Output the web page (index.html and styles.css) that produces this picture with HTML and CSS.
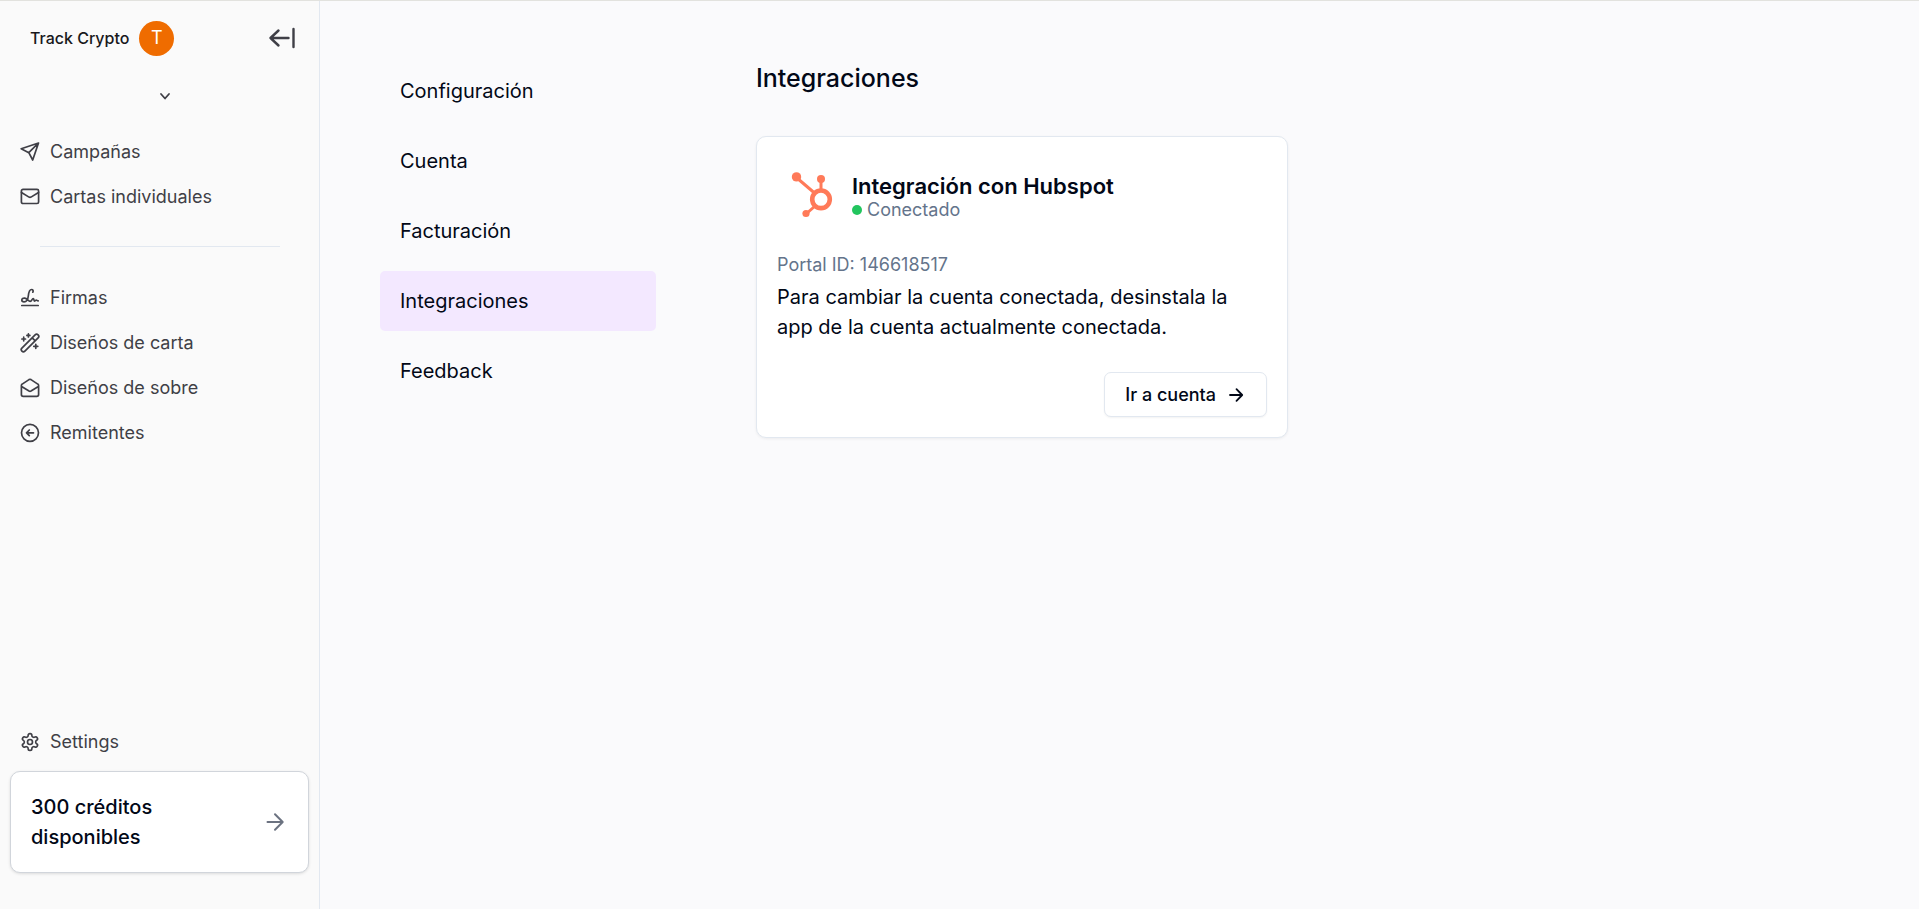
FILE: index.html
```html
<!DOCTYPE html>
<html lang="es">
<head>
<meta charset="utf-8">
<meta name="viewport" content="width=device-width, initial-scale=1">
<title>Integraciones</title>
<link rel="stylesheet" href="styles.css">
</head>
<body>
<div class="app">
  <aside class="sidebar">
    <header class="brand">
      <span class="brand-name">Track Crypto</span>
      <span class="avatar">T</span>
      <button class="icon-button collapse" type="button" aria-label="Contraer menú">
        <svg width="28" height="24" viewBox="0 0 28 24" fill="none" stroke="currentColor" stroke-width="2.4" stroke-linecap="round" stroke-linejoin="round"><path d="M20.500 12H2.500M10.500 4.500 2.500 12l8 7.500M25.500 3v18"/></svg>
      </button>
    </header>
    <div class="switcher">
      <button class="icon-button" type="button" aria-label="Cambiar espacio">
        <svg width="20" height="20" viewBox="0 0 20 20" fill="none" stroke="currentColor" stroke-width="1.800" stroke-linecap="round" stroke-linejoin="round"><path d="m6 8 4 4.500L14 8"/></svg>
      </button>
    </div>
    <nav class="menu" aria-label="Principal">
      <a class="menu-link" href="#">
        <svg class="icon" viewBox="0 0 20 20"><path d="M18.500 1 1.200 6.800l7.600 3.900 3.900 7.300zM18.300 1.200 8.800 10.700"/></svg>
        Campañas
      </a>
      <a class="menu-link" href="#">
        <svg class="icon" viewBox="0 0 20 20"><rect x="1.400" y="2.300" width="17.200" height="14.200" rx="1.600"/><path d="m1.500 5.500 7.500 4.600a2 2 0 0 0 2 0l7.500-4.600"/></svg>
        Cartas individuales
      </a>
    </nav>
    <hr class="divider">
    <nav class="menu" aria-label="Diseños">
      <a class="menu-link" href="#">
        <svg class="icon" viewBox="0 0 20 20"><path d="M1.800 17.500h16.400M12.800 4.200c.8-1.300.2-2.700-1.200-2.700C9.200 1.500 8.600 5 8.300 8c-.4 3.800-1.800 5.800-4.200 5.800-1.300 0-2.300-.7-2.300-1.800 0-1.300 1.300-2 2.900-1.800 2.500.3 3.600 3.200 5.500 3.200 1.700 0 1.700-2.900 3-2.900 1 0 .4 2.600 1.500 2.600.8 0 .9-1 1.600-1s.7.700 1.900.7"/></svg>
        Firmas
      </a>
      <a class="menu-link" href="#">
        <svg class="icon" viewBox="0 0 20 20"><path d="M1.900 15.100 15.100 1.900a2.100 2.100 0 0 1 3 3L4.900 18.100a2.100 2.100 0 0 1-3-3zM12.200 4.800l3 3M3.700 4.200v3.600M1.900 6h3.600M8.400.9v3M6.900 2.400h3M15.800 11.300v4M13.800 13.300h4"/></svg>
        Diseños de carta
      </a>
      <a class="menu-link" href="#">
        <svg class="icon" viewBox="0 0 20 20"><path d="M1.400 7.500c0-.6.300-1.100.8-1.400L9 1.600a2 2 0 0 1 2 0l6.800 4.500c.5.300.8.800.8 1.400v9c0 1.100-.7 1.900-1.800 1.900H3.200c-1.100 0-1.800-.8-1.800-1.900zM1.600 8.500 9 13a2 2 0 0 0 2 0l7.400-4.500"/></svg>
        Diseños de sobre
      </a>
      <a class="menu-link" href="#">
        <svg class="icon" viewBox="0 0 20 20"><circle cx="10" cy="9.800" r="8.500"/><path d="M13.500 9.800h-7M9.300 7 6.500 9.800l2.800 2.800"/></svg>
        Remitentes
      </a>
    </nav>
    <div class="sidebar-foot">
      <a class="menu-link" href="#">
        <svg class="icon icon-gear" viewBox="0 0 24 24"><path d="M12.220 2h-.44a2 2 0 0 0-2 2v.18a2 2 0 0 1-1 1.730l-.43.250a2 2 0 0 1-2 0l-.15-.08a2 2 0 0 0-2.730.73l-.22.380a2 2 0 0 0 .73 2.730l.15.100a2 2 0 0 1 1 1.720v.51a2 2 0 0 1-1 1.740l-.15.090a2 2 0 0 0-.73 2.730l.22.380a2 2 0 0 0 2.730.73l.15-.08a2 2 0 0 1 2 0l.43.250a2 2 0 0 1 1 1.730V20a2 2 0 0 0 2 2h.44a2 2 0 0 0 2-2v-.18a2 2 0 0 1 1-1.730l.43-.25a2 2 0 0 1 2 0l.15.080a2 2 0 0 0 2.730-.73l.22-.39a2 2 0 0 0-.73-2.730l-.15-.08a2 2 0 0 1-1-1.740v-.5a2 2 0 0 1 1-1.740l.15-.09a2 2 0 0 0 .73-2.730l-.22-.38a2 2 0 0 0-2.730-.73l-.15.080a2 2 0 0 1-2 0l-.43-.25a2 2 0 0 1-1-1.730V4a2 2 0 0 0-2-2z"/><circle cx="12" cy="12" r="3"/></svg>
        Settings
      </a>
      <a class="credits" href="#">
        <span class="credits-text">300 créditos disponibles</span>
        <svg width="28" height="28" viewBox="0 0 28 28" fill="none" stroke="currentColor" stroke-width="2" stroke-linecap="round" stroke-linejoin="round"><path d="M7.500 14h15M15 6.300l7.700 7.700-7.700 7.700"/></svg>
      </a>
    </div>
  </aside>
  <main class="content">
    <nav class="tabs" aria-label="Ajustes">
      <a class="tab" href="#">Configuración</a>
      <a class="tab" href="#">Cuenta</a>
      <a class="tab" href="#">Facturación</a>
      <a class="tab tab-active" href="#" aria-current="page">Integraciones</a>
      <a class="tab" href="#">Feedback</a>
    </nav>
    <section class="panel">
      <h1 class="title">Integraciones</h1>
      <article class="card">
        <header class="card-head">
          <svg class="logo" viewBox="0 0 50 50" fill="none" stroke="#ff7a59"><circle cx="34" cy="27.300" r="8.800" stroke-width="4.600"/><path d="M34 19V7M27.500 21 10 6M27.500 34.500 19 42" stroke-width="3"/><g fill="#ff7a59" stroke="none"><circle cx="9.500" cy="4.900" r="4.700"/><circle cx="34" cy="7" r="4"/><circle cx="19" cy="41.500" r="3.600"/></g></svg>
          <div>
            <h2 class="card-title">Integración con Hubspot</h2>
            <p class="status"><span class="dot"></span>Conectado</p>
          </div>
        </header>
        <div class="card-body">
          <p class="portal">Portal ID: 146618517</p>
          <p class="note">Para cambiar la cuenta conectada, desinstala la app de la cuenta actualmente conectada.</p>
        </div>
        <footer class="card-foot">
          <button class="account" type="button">
            Ir a cuenta
            <svg width="20" height="20" viewBox="0 0 20 20" fill="none" stroke="currentColor" stroke-width="1.800" stroke-linecap="round" stroke-linejoin="round"><path d="M4 10h12M10.500 4.200 16.200 10l-5.700 5.800"/></svg>
          </button>
        </footer>
      </article>
    </section>
  </main>
</div>
</body>
</html>
```
FILE: styles.css
```css
* { box-sizing: border-box; }

body {
  margin: 0;
  color: #020817;
  background: #fafafc;
  font-family: Inter, "Liberation Sans", sans-serif;
  font-size: 20px;
  line-height: 30px;
}

h1, h2, p { margin: 0; font-weight: inherit; }
a { color: inherit; text-decoration: none; }
button { font: inherit; color: inherit; cursor: pointer; }
svg { display: block; flex: none; }

.app {
  display: flex;
  min-height: 100vh;
  border-top: 1px solid #e2e2de;
}

.sidebar {
  display: flex;
  flex: none;
  flex-direction: column;
  width: 320px;
  padding: 15px 10px 36px;
  border-right: 1px solid #e2e8f0;
  background: #fafafa;
  color: #3f3f46;
}

.brand {
  display: flex;
  align-items: center;
  gap: 10px;
  height: 44px;
  padding: 0 13px 0 20px;
}

.brand-name {
  color: #18181b;
  font-size: 16px;
  font-weight: 500;
}

.avatar {
  display: grid;
  place-items: center;
  width: 35px;
  height: 35px;
  border-radius: 50%;
  background: #ef6c00;
  color: #fff;
  font-size: 18px;
}

.icon-button {
  padding: 0;
  border: 0;
  background: none;
}

.collapse { margin-left: auto; }

.switcher {
  display: flex;
  justify-content: center;
  padding: 26px 0 23px 10px;
}

.menu {
  display: flex;
  flex-direction: column;
}

.menu-link {
  display: flex;
  align-items: center;
  gap: 10px;
  height: 45px;
  padding: 0 10px;
  font-size: 18px;
}

.icon {
  width: 20px;
  height: 20px;
  fill: none;
  stroke: currentColor;
  stroke-width: 1.7;
  stroke-linecap: round;
  stroke-linejoin: round;
}

.icon-gear { stroke-width: 2; }

.divider {
  width: 240px;
  height: 1px;
  margin: 27px 0 28px 30px;
  border: 0;
  background: #e2e8f0;
}

.sidebar-foot { margin-top: auto; }

.credits {
  display: flex;
  align-items: center;
  justify-content: space-between;
  margin-top: 7px;
  padding: 20px;
  border: 1px solid #d1d5db;
  border-radius: 10px;
  background: #fff;
  box-shadow: 0 1px 3px rgb(0 0 0 / 12%);
  color: #6b7280;
}

.credits-text {
  max-width: 160px;
  color: #020817;
  font-weight: 500;
}

.content {
  display: flex;
  flex: 1;
  align-items: flex-start;
  gap: 100px;
  min-width: 0;
  padding: 60px;
}

.tabs {
  display: flex;
  flex: none;
  flex-direction: column;
  gap: 10px;
  width: 276px;
}

.tab {
  padding: 15px 20px;
  border-radius: 5px;
}

.tab-active { background: #f3e8ff; }

.panel {
  flex: 1;
  min-width: 0;
}

.title {
  font-size: 25px;
  font-weight: 500;
  line-height: 35px;
}

.card {
  max-width: 532px;
  margin-top: 40px;
  padding: 20px;
  border: 1px solid #e2e8f0;
  border-radius: 10px;
  background: #fff;
  box-shadow: 0 1px 3px rgb(0 0 0 / 6%);
}

.card-head {
  display: flex;
  align-items: center;
  gap: 15px;
  padding: 15px 10px 10px;
}

.logo {
  width: 50px;
  height: 50px;
}

.card-title {
  font-size: 22px;
  font-weight: 600;
  line-height: 25px;
}

.status {
  display: flex;
  align-items: center;
  gap: 5px;
  color: #64748b;
  font-size: 18px;
  line-height: 22px;
}

.dot {
  width: 10px;
  height: 10px;
  border-radius: 50%;
  background: #22c55e;
}

.card-body { padding-top: 18px; }

.portal {
  color: #64748b;
  font-size: 18px;
}

.note { padding-top: 2px; }

.card-foot {
  display: flex;
  justify-content: flex-end;
  padding-top: 30px;
}

.account {
  display: flex;
  align-items: center;
  gap: 10px;
  height: 45px;
  padding: 0 20px;
  border: 1px solid #e2e8f0;
  border-radius: 7px;
  background: #fff;
  box-shadow: 0 1px 2px rgb(0 0 0 / 5%);
  font-size: 18px;
  font-weight: 500;
}
```
